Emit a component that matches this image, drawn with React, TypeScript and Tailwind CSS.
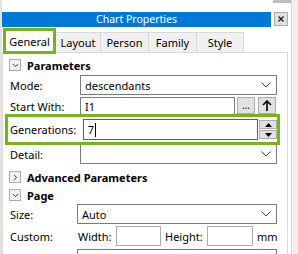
import { ChevronDown, ChevronRight } from 'lucide-react';

const font = "font-['Noto_Sans','Liberation_Sans',sans-serif]";

function ComboChevron() {
  return (
    <svg width="10" height="6" viewBox="0 0 10 6" className="shrink-0">
      <polyline points="0.5,0.5 5,5 9.5,0.5" fill="none" stroke="#404040" strokeWidth="1" />
    </svg>
  );
}

function Combo({ value, width }: { value?: string; width: string }) {
  return (
    <div className={`${width} h-[20px] border border-[#7a7a7a] bg-white flex items-center pl-[4px] pr-[5px]`}>
      <span className="flex-1 text-[11px] leading-none text-black">{value}</span>
      <ComboChevron />
    </div>
  );
}

function SectionHeader({ title, open }: { title: string; open: boolean }) {
  return (
    <div className="h-[18px] shrink-0 flex items-center pl-[6px] gap-[6px]">
      <div className="w-[12px] h-[12px] border border-[#adadad] bg-[#f0f0f0] flex items-center justify-center">
        {open ? (
          <ChevronDown className="w-[9px] h-[9px] text-[#333]" strokeWidth={2.5} />
        ) : (
          <ChevronRight className="w-[9px] h-[9px] text-[#333]" strokeWidth={2.5} />
        )}
      </div>
      <span className="text-[11px] font-bold leading-none text-black">{title}</span>
    </div>
  );
}

const tabs = ['Layout', 'Person', 'Family', 'Style'];

export default function App() {
  return (
    <div className={`w-[298px] h-[254px] overflow-hidden bg-white flex ${font}`}>
      {/* left edge */}
      <div className="w-[2px] bg-[#e3e3e3] shrink-0" />

      <div className="w-[289px] shrink-0 flex flex-col">
        {/* top strip */}
        <div className="h-[12px] shrink-0 flex">
          <div className="ml-auto mr-[-1px] w-[19px] h-[3px] bg-[#bdbdbd]" />
        </div>

        {/* title bar */}
        <div className="h-[15px] shrink-0 flex">
          <div className="w-[269px] h-[15px] bg-[#0078d7] flex items-center justify-center">
            <span className="text-white text-[10.5px] leading-none">Chart Properties</span>
          </div>
          <div className="ml-[3px] w-[14px] h-[14px] border border-[#adadad] bg-[#e1e1e1] flex items-center justify-center">
            <svg width="6" height="6" viewBox="0 0 6 6">
              <path d="M0.5 0.5 L5.5 5.5 M5.5 0.5 L0.5 5.5" stroke="#222" strokeWidth="1.4" />
            </svg>
          </div>
        </div>

        {/* tabs */}
        <div className="h-[27px] shrink-0 flex items-end relative z-10 pl-[1px] text-[11px]">
          <div className="w-[53px] h-[26px] border-[3px] border-[#77b31f] bg-white flex items-center justify-center">
            <span className="leading-none text-black">General</span>
          </div>
          {tabs.map((t, i) => (
            <div
              key={t}
              className={`h-[21px] mb-[1px] border border-l-0 border-[#d9d9d9] bg-[#f0f0f0] flex items-center justify-center ${
                i === 0 ? 'w-[45px]' : i === 1 ? 'w-[48px]' : i === 2 ? 'w-[48px]' : 'w-[47px]'
              }`}
            >
              <span className="leading-none text-black">{t}</span>
            </div>
          ))}
        </div>

        {/* panel */}
        <div className="w-[286px] h-[260px] shrink-0 -mt-[2px] border border-[#d9d9d9] bg-white flex flex-col text-[11px] text-black">
          <div className="mt-[3px] shrink-0">
            <SectionHeader title="Parameters" open />
          </div>

          <div className="mt-[1px] h-[20px] shrink-0 flex items-center pl-[7px]">
            <span className="w-[70px] leading-none">Mode:</span>
            <Combo value="descendants" width="w-[197px]" />
          </div>

          <div className="mt-[2px] h-[18px] shrink-0 flex items-start pl-[7px]">
            <span className="w-[70px] leading-none mt-[4px]">Start With:</span>
            <div className="w-[155px] h-[18px] border border-[#7a7a7a] bg-white pl-[4px] flex items-center leading-none">
              I1
            </div>
            <div className="ml-[2px] w-[18px] h-[17px] border border-[#adadad] bg-[#e1e1e1] flex items-end justify-center pb-[3px] text-[10px] leading-none">
              ...
            </div>
            <div className="ml-[3px] w-[18px] h-[17px] border border-[#adadad] bg-[#e1e1e1] flex items-center justify-center">
              <svg width="10" height="11" viewBox="0 0 10 11">
                <path d="M5 1 L5 11 M1 5 L5 1 L9 5" fill="none" stroke="#000" strokeWidth="1.6" />
              </svg>
            </div>
          </div>

          {/* highlighted generations row */}
          <div className="relative z-10 shrink-0 -mt-[1px] ml-[2px] w-[275px] h-[31px] border-[3px] border-[#77b31f] flex items-center pl-[2px]">
            <span className="w-[73px] leading-none">Generations:</span>
            <div className="w-[176px] h-[21px] border border-[#0078d7] bg-white flex items-center pl-[4px] leading-none">
              7<span className="w-[1px] h-[14px] bg-black ml-[1px]" />
            </div>
            <div className="ml-[1px] w-[18px] flex flex-col gap-[1px]">
              <div className="h-[9px] border border-[#adadad] bg-[#e1e1e1] flex items-center justify-center">
                <svg width="7" height="4" viewBox="0 0 7 4">
                  <path d="M0 4 L3.5 0 L7 4 Z" fill="#000" />
                </svg>
              </div>
              <div className="h-[9px] border border-[#adadad] bg-[#e1e1e1] flex items-center justify-center">
                <svg width="7" height="4" viewBox="0 0 7 4">
                  <path d="M0 0 L3.5 4 L7 0 Z" fill="#000" />
                </svg>
              </div>
            </div>
          </div>

          <div className="-mt-[1px] h-[20px] shrink-0 flex items-center pl-[7px]">
            <span className="w-[70px] leading-none">Detail:</span>
            <Combo width="w-[197px]" />
          </div>

          <div className="mt-[4px] shrink-0">
            <SectionHeader title="Advanced Parameters" open={false} />
          </div>
          <SectionHeader title="Page" open />

          <div className="h-[20px] shrink-0 flex items-center pl-[7px]">
            <span className="w-[67px] leading-none">Size:</span>
            <Combo value="Auto" width="w-[200px]" />
          </div>

          <div className="mt-[2px] h-[20px] shrink-0 flex items-center pl-[7px]">
            <span className="w-[68px] leading-none">Custom:</span>
            <span className="w-[38px] leading-none">Width:</span>
            <div className="w-[45px] h-[20px] border border-[#adadad] bg-white" />
            <span className="ml-[4px] w-[42px] leading-none">Height:</span>
            <div className="w-[46px] h-[20px] border border-[#adadad] bg-white" />
            <span className="ml-[4px] leading-none">mm</span>
          </div>

          <div className="mt-[3px] h-[20px] shrink-0 flex items-center pl-[74px]">
            <Combo width="w-[200px]" />
          </div>
        </div>
      </div>

      {/* right scroll strip */}
      <div className="w-[1px] bg-[#dadada] shrink-0" />
      <div className="flex-1 bg-[#f0f0f0]" />
    </div>
  );
}
